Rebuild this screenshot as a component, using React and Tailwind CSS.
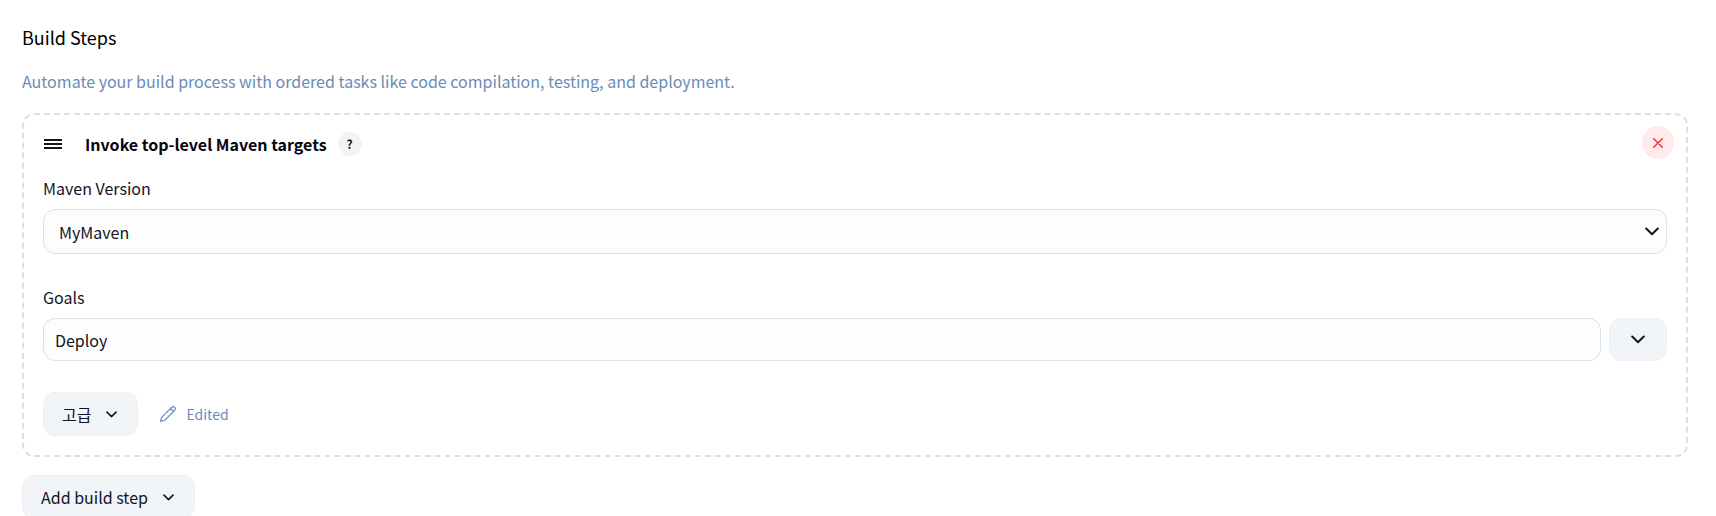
import { useState } from 'react';

const BTN = 'flex items-center rounded-xl border border-[#edf1f5] bg-[#f2f5f8] hover:bg-[#e9eef3]';
const FIELD = 'w-full min-w-0 rounded-xl border border-[#d8e0ea] bg-[#fdfdfd] outline-none focus:border-[#6b8bb5]';

function Chevron({ className }) {
  return (
    <svg viewBox="0 0 14 9" fill="none" stroke="currentColor" strokeWidth="2" strokeLinecap="round" strokeLinejoin="round" className={className} aria-hidden="true">
      <path d="M1.2 1.5 7 7.2l5.8-5.7" />
    </svg>
  );
}

function DragHandle() {
  return (
    <svg viewBox="0 0 18 12" stroke="currentColor" strokeWidth="2" className="h-3 w-[18px]" aria-hidden="true">
      <path d="M0 2h18M0 6h18M0 10h18" />
    </svg>
  );
}

function Pencil() {
  return (
    <svg viewBox="0 0 512 512" fill="none" stroke="currentColor" strokeWidth="34" strokeLinejoin="round" strokeLinecap="round" className="size-[18px]" aria-hidden="true">
      <path d="M364 62 96 330c-14 14-22 28-26 46L44 468l92-26c18-4 32-12 46-26l268-268a61 61 0 0 0-86-86zM326 100l86 86" />
    </svg>
  );
}

export default function App() {
  const [version, setVersion] = useState('MyMaven');
  const [goals, setGoals] = useState('Deploy');

  return (
    <main className="h-screen overflow-hidden bg-white px-[22px] pr-7 pt-[25px] font-['Noto_Sans_CJK_KR',sans-serif] text-base leading-6 text-[#14141f]">
      <h1 className="text-lg leading-6 text-black">Build Steps</h1>
      <p className="mt-5 text-[#6b8bb5]">
        Automate your build process with ordered tasks like code compilation, testing, and deployment.
      </p>

      <section className="relative mt-5 rounded-xl border-2 border-dashed border-[#d8e0ea] px-[19px] pb-[19px] pt-[17px]">
        <div className="flex items-center pl-px">
          <DragHandle />
          <h2 className="ml-[23px] font-bold text-[#05050f]">Invoke top-level Maven targets</h2>
          <button aria-label="Help" className="ml-[11px] flex size-6 items-center justify-center rounded-full border border-[#edf1f5] bg-[#f2f5f8] text-xs font-bold">
            ?
          </button>
        </div>
        <button aria-label="Delete" className="absolute right-3 top-[11px] flex h-[33px] w-8 items-center justify-center rounded-full bg-[#ffebeb] text-[#ff1a1a]">
          <svg viewBox="0 0 10 10" stroke="currentColor" strokeWidth="1.3" strokeLinecap="round" className="size-[10px]" aria-hidden="true">
            <path d="m.7.7 8.6 8.6M9.3.7.7 9.3" />
          </svg>
        </button>

        <label htmlFor="version" className="mt-5 block">Maven Version</label>
        <div className="relative mt-[9px]">
          <select id="version" value={version} onChange={e => setVersion(e.target.value)} className={`${FIELD} block h-[45px] appearance-none px-[15px]`}>
            <option>MyMaven</option>
          </select>
          <Chevron className="pointer-events-none absolute right-2 top-[18px] h-[9px] w-[14px]" />
        </div>

        <label htmlFor="goals" className="mt-[31px] block">Goals</label>
        <div className="mt-[9px] flex gap-2">
          <input id="goals" value={goals} onChange={e => setGoals(e.target.value)} className={`${FIELD} h-[43px] px-[11px]`} />
          <button aria-label="Expand goals" className={`${BTN} w-[58px] shrink-0 justify-center`}>
            <Chevron className="h-[9px] w-[14px]" />
          </button>
        </div>

        <div className="mt-[31px] flex items-center">
          <button className={`${BTN} h-11 gap-[15px] pl-[18px] pr-5`}>
            고급
            <Chevron className="h-[7px] w-[11px]" />
          </button>
          <span className="ml-[21px] flex items-center gap-[9px] text-sm leading-6 text-[#6b8bb5]">
            <Pencil />
            Edited
          </span>
        </div>
      </section>

      <button className={`${BTN} mt-[18px] h-11 gap-[15px] pl-[18px] pr-5`}>
        Add build step
        <Chevron className="h-[7px] w-[11px]" />
      </button>
    </main>
  );
}
